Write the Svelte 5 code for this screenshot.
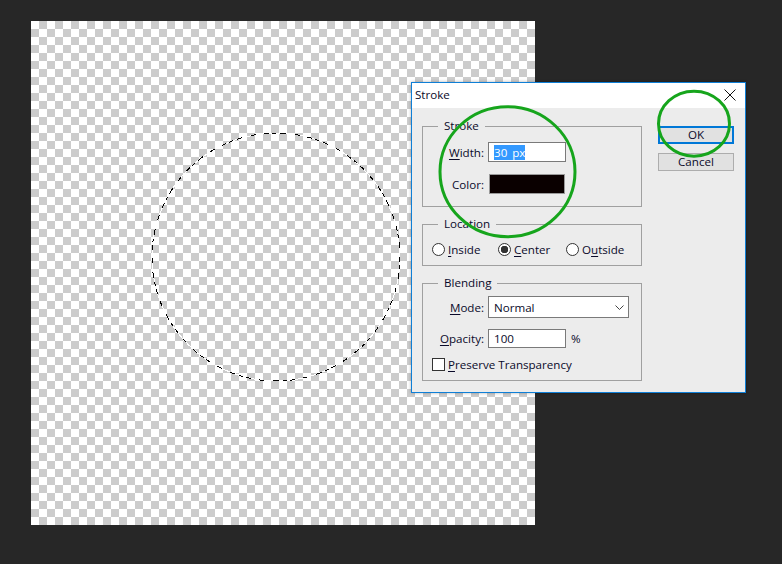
<script>
	let width = $state('30 px');
	let opacity = $state(100);
</script>

<div class="desk">
	<div class="canvas">
		<svg class="ants" width="504" height="504" viewBox="0 0 504 504">
			<circle class="ants-light" cx="245" cy="236" r="124" />
			<circle class="ants-dark" cx="245" cy="236" r="124" />
		</svg>
	</div>

	<div class="dialog">
		<header class="title">
			<span>Stroke</span>
			<svg class="close" width="12" height="12" viewBox="0 0 12 12">
				<path d="M.5.5l11 11M11.500.5l-11 11" />
			</svg>
		</header>

		<div class="content">
			<div class="groups">
				<fieldset class="stroke">
					<legend>Stroke</legend>
					<div class="row">
						<span class="label"><u>W</u>idth:</span>
						<div class="field short"><span class="selected">{width}</span></div>
					</div>
					<div class="row">
						<span class="label">Color:</span>
						<div class="swatch"></div>
					</div>
				</fieldset>

				<fieldset class="location">
					<legend>Location</legend>
					<div class="radios">
						<span class="opt"><i class="radio"></i><span><u>I</u>nside</span></span>
						<span class="opt"><i class="radio on"></i><span><u>C</u>enter</span></span>
						<span class="opt"><i class="radio"></i><span>O<u>u</u>tside</span></span>
					</div>
				</fieldset>

				<fieldset class="blending">
					<legend>Blending</legend>
					<div class="row">
						<span class="label"><u>M</u>ode:</span>
						<div class="field select">
							<span>Normal</span>
							<svg width="9" height="5" viewBox="0 0 9 5"><path d="M.5.5l4 4 4-4" /></svg>
						</div>
					</div>
					<div class="row">
						<span class="label"><u>O</u>pacity:</span>
						<div class="field short thin"><span>{opacity}</span></div>
						<span class="unit">%</span>
					</div>
					<div class="opt check"><i class="box"></i><span><u>P</u>reserve Transparency</span></div>
				</fieldset>
			</div>

			<div class="buttons">
				<div class="btn primary">OK</div>
				<div class="btn">Cancel</div>
			</div>
		</div>
	</div>

	<svg class="marks" width="782" height="564" viewBox="0 0 782 564">
		<ellipse cx="507.500" cy="171.700" rx="67.500" ry="65" />
		<ellipse cx="694" cy="123.700" rx="35.500" ry="32.500" />
	</svg>
</div>

<style>
	:global(html), :global(body) {
		margin: 0;
		overflow: hidden;
		background: #272727;
	}

	.desk {
		position: relative;
		width: 782px;
		height: 564px;
		box-sizing: border-box;
		padding: 21px 0 0 31px;
		background: #272727;
		font-family: "Open Sans", "Noto Sans", sans-serif;
		font-size: 11.600px;
		color: #0a0a2a;
	}

	.canvas {
		position: relative;
		width: 504px;
		height: 504px;
		background: repeating-conic-gradient(#cccccc 0 25%, #ffffff 0 50%) 0 0 / 16px 16px;
	}

	.ants {
		position: absolute;
		inset: 0;
		fill: none;
		shape-rendering: crispEdges;
	}
	.ants-light {
		stroke: #fff;
		stroke-width: 1;
	}
	.ants-dark {
		stroke: #000;
		stroke-width: 1;
		stroke-dasharray: 5 3 4 4 6 9 5 8;
	}

	.dialog {
		position: absolute;
		left: 411px;
		top: 82px;
		width: 335px;
		height: 311px;
		box-sizing: border-box;
		border: 1px solid #0f7fd6;
		background: #ececec;
		box-shadow: 0 0 3px rgba(0, 0, 0, .3);
	}

	.title {
		display: flex;
		align-items: center;
		justify-content: space-between;
		box-sizing: border-box;
		height: 25px;
		padding: 0 9px 2px 3px;
		background: #fff;
	}
	.close {
		fill: none;
		stroke: #111;
		stroke-width: 1;
	}

	.content {
		display: flex;
		align-items: flex-start;
		padding: 10px 11px 0 10px;
	}

	.groups {
		display: flex;
		flex-direction: column;
		gap: 9px;
		width: 220px;
	}

	fieldset {
		margin: 0;
		padding: 0;
		border: 1px solid #a0a0a0;
		min-width: 0;
	}
	legend {
		margin-left: 15px;
		padding: 0 6px;
		line-height: 16px;
	}
	u {
		text-underline-offset: 2px;
		text-decoration-thickness: 1px;
	}

	.row {
		display: flex;
		align-items: center;
		gap: 4px;
	}
	.label {
		width: 61px;
		text-align: right;
	}

	.stroke {
		height: 87px;
	}
	.stroke .row:first-of-type {
		margin-top: 8px;
	}
	.stroke .row + .row {
		margin-top: 12px;
	}

	.field {
		box-sizing: border-box;
		height: 20px;
		border: 1px solid #7a7a7a;
		background: #fff;
		display: flex;
		align-items: center;
		padding-left: 5px;
	}
	.short {
		width: 78px;
	}
	.thin {
		height: 19px;
	}
	.selected {
		background: #3399ff;
		color: #fff;
		line-height: 15px;
		word-spacing: 2px;
	}
	.swatch {
		box-sizing: border-box;
		width: 76px;
		height: 20px;
		margin-left: 1px;
		border: 1px solid #9a9a9a;
		background: #0a0000;
	}

	.location {
		height: 48px;
	}
	.radios {
		display: flex;
		margin: 10px 0 0 9px;
	}
	.opt {
		display: flex;
		align-items: center;
		gap: 3px;
	}
	.opt:nth-child(1) {
		width: 66px;
	}
	.opt:nth-child(2) {
		width: 68px;
	}
	.radio {
		box-sizing: border-box;
		width: 13px;
		height: 13px;
		border: 1px solid #333;
		border-radius: 50%;
		background: #fff;
	}
	.radio.on {
		background: radial-gradient(circle, #333 0 3.500px, #fff 4px);
	}

	.blending {
		height: 104px;
	}
	.blending .row:first-of-type {
		margin-top: 5px;
	}
	.blending .row + .row {
		margin-top: 11px;
	}
	.select {
		width: 141px;
		height: 22px;
		justify-content: space-between;
		padding-right: 4px;
	}
	.select svg {
		fill: none;
		stroke: #444;
	}
	.unit {
		margin-left: 1px;
	}
	.check {
		margin: 9px 0 0 9px;
	}
	.check.opt {
		width: auto;
	}
	.box {
		box-sizing: border-box;
		width: 13px;
		height: 13px;
		border: 1px solid #333;
		background: #fff;
	}

	.buttons {
		display: flex;
		flex-direction: column;
		gap: 9px;
		margin: 8px 0 0 16px;
	}
	.btn {
		box-sizing: border-box;
		width: 76px;
		height: 18px;
		line-height: 16px;
		text-align: center;
		border: 1px solid #adadad;
		background: #e1e1e1;
	}
	.primary {
		border: 2px solid #0078d7;
		line-height: 14px;
	}

	.marks {
		position: absolute;
		inset: 0;
		pointer-events: none;
		fill: none;
		stroke: #16a51c;
		stroke-width: 3;
	}
</style>
